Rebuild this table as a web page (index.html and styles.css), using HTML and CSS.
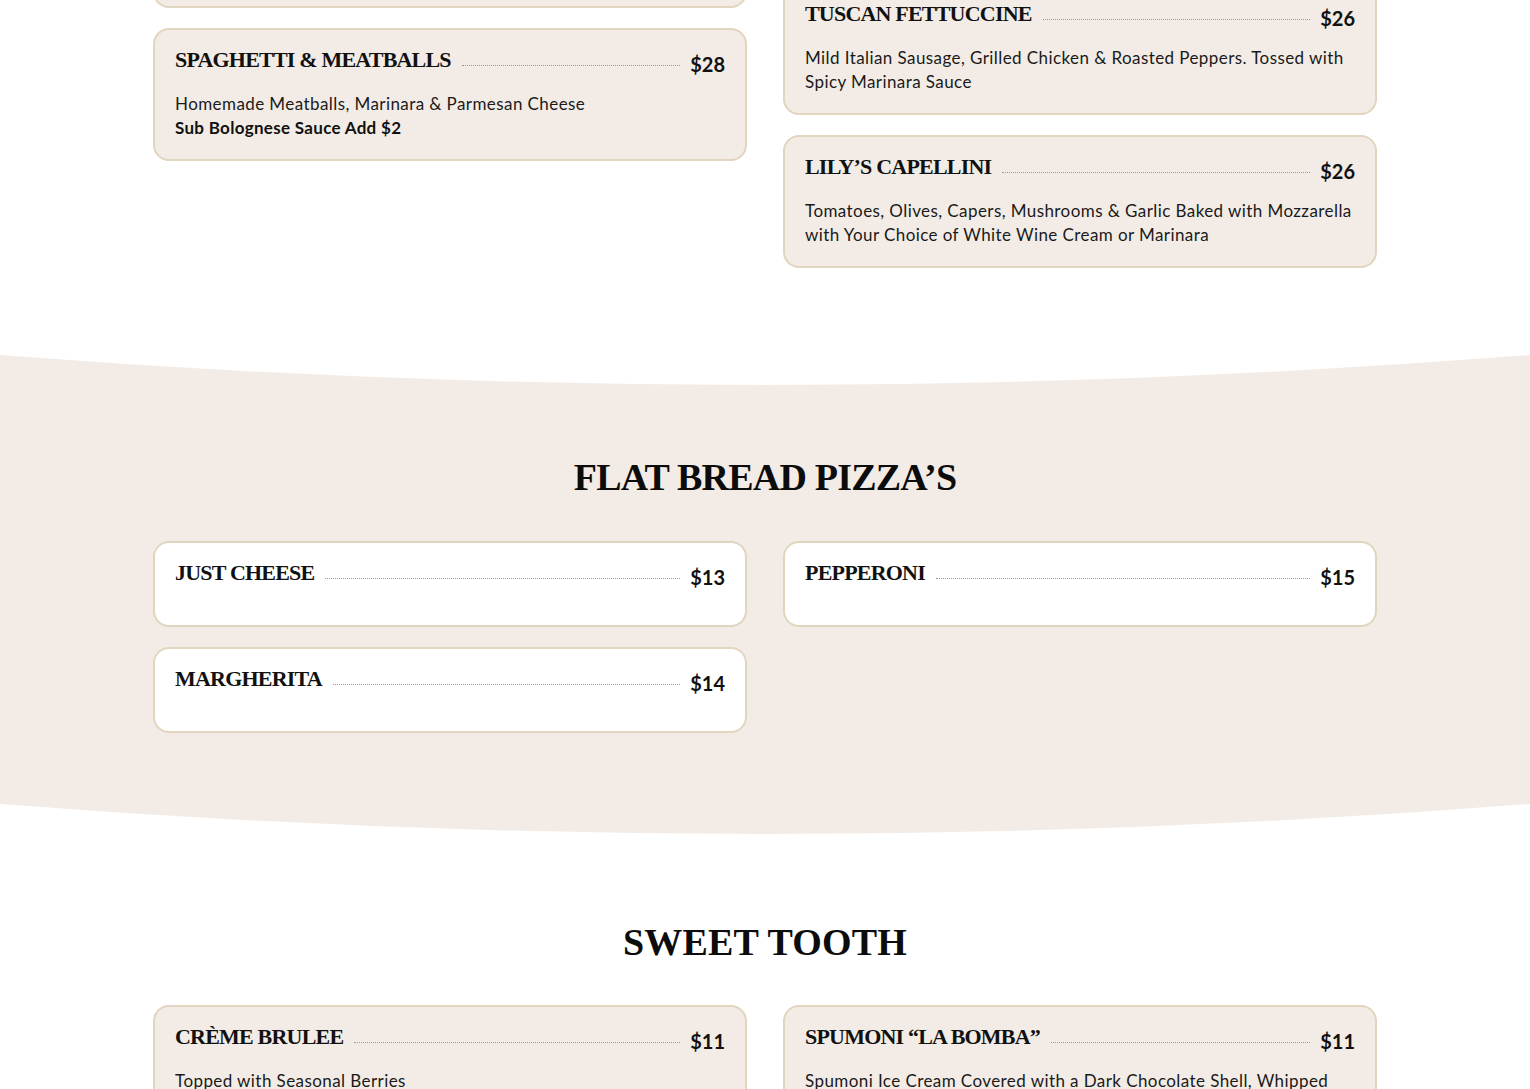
FILE: index.html
```html
<!DOCTYPE html>
<html lang="en">
<head>
<meta charset="utf-8">
<title>Menu</title>
<link rel="stylesheet" href="styles.css">
</head>
<body>
<div class="page">
  <section class="section section-top">
    <div class="columns">
      <div class="col">
        <div class="card">
          <div class="item-head"><h3 class="item-name">FETTUCCINE ALFREDO</h3><span class="dots"></span><span class="price">$24</span></div>
          <p class="desc">Creamy Parmesan Sauce Tossed with Fresh Fettuccine<br>Add Chicken $6</p>
        </div>
        <div class="card">
          <div class="item-head"><h3 class="item-name">SPAGHETTI &amp; MEATBALLS</h3><span class="dots"></span><span class="price">$28</span></div>
          <p class="desc">Homemade Meatballs, Marinara &amp; Parmesan Cheese<br><strong>Sub Bolognese Sauce Add $2</strong></p>
        </div>
      </div>
      <div class="col">
        <div class="card card-tall">
          <div class="item-head"><h3 class="item-name">BAKED ZITI</h3><span class="dots"></span><span class="price">$22</span></div>
          <p class="desc"></p>
        </div>
        <div class="card">
          <div class="item-head"><h3 class="item-name">TUSCAN FETTUCCINE</h3><span class="dots"></span><span class="price">$26</span></div>
          <p class="desc">Mild Italian Sausage, Grilled Chicken &amp; Roasted Peppers. Tossed with Spicy Marinara Sauce</p>
        </div>
        <div class="card">
          <div class="item-head"><h3 class="item-name">LILY’S CAPELLINI</h3><span class="dots"></span><span class="price">$26</span></div>
          <p class="desc">Tomatoes, Olives, Capers, Mushrooms &amp; Garlic Baked with Mozzarella with Your Choice of White Wine Cream or Marinara</p>
        </div>
      </div>
    </div>
  </section>

  <section class="band">
    <svg class="wave" viewBox="0 0 1530 30" preserveAspectRatio="none" aria-hidden="true"><path d="M0 0 Q765 60 1530 0 L1530 31 L0 31 Z" fill="#f3ece6"/></svg>
    <div class="band-body">
      <h2 class="section-title">FLAT BREAD PIZZA’S</h2>
      <div class="columns">
        <div class="col">
          <div class="card card-white">
            <div class="item-head"><h3 class="item-name">JUST CHEESE</h3><span class="dots"></span><span class="price">$13</span></div>
            <p class="desc"></p>
          </div>
          <div class="card card-white">
            <div class="item-head"><h3 class="item-name">MARGHERITA</h3><span class="dots"></span><span class="price">$14</span></div>
            <p class="desc"></p>
          </div>
        </div>
        <div class="col">
          <div class="card card-white">
            <div class="item-head"><h3 class="item-name">PEPPERONI</h3><span class="dots"></span><span class="price">$15</span></div>
            <p class="desc"></p>
          </div>
        </div>
      </div>
    </div>
    <svg class="wave" viewBox="0 0 1530 30" preserveAspectRatio="none" aria-hidden="true"><path d="M0 -1 L1530 -1 L1530 0 Q765 60 0 0 Z" fill="#f3ece6"/></svg>
  </section>

  <section class="section section-sweet">
    <h2 class="section-title section-title-wide">SWEET TOOTH</h2>
    <div class="columns">
      <div class="col">
        <div class="card">
          <div class="item-head"><h3 class="item-name">CRÈME BRULEE</h3><span class="dots"></span><span class="price">$11</span></div>
          <p class="desc">Topped with Seasonal Berries</p>
        </div>
      </div>
      <div class="col">
        <div class="card">
          <div class="item-head"><h3 class="item-name">SPUMONI “LA BOMBA”</h3><span class="dots"></span><span class="price">$11</span></div>
          <p class="desc">Spumoni Ice Cream Covered with a Dark Chocolate Shell, Whipped Cream &amp; Cherries</p>
        </div>
      </div>
    </div>
  </section>
</div>
</body>
</html>
```

FILE: styles.css
```css
* { box-sizing: border-box; }
html, body { margin: 0; padding: 0; background: #ffffff; }
body { color: #111; font-family: Lato, "Open Sans", sans-serif; overflow: hidden; }

.page { width: 100%; }

.section { width: 1224px; margin: 0 auto; }
.section-top { margin-top: -125px; padding-bottom: 87px; }
.section-sweet { padding-top: 85px; padding-bottom: 60px; }

.columns {
  display: grid;
  grid-template-columns: 1fr 1fr;
  column-gap: 36px;
  width: 1224px;
  margin: 0 auto;
  align-items: start;
}
.col { display: flex; flex-direction: column; gap: 20px; }

.card {
  background: #f3ece6;
  border: 2px solid #e2d5bf;
  border-radius: 16px;
  padding: 20px;
}
.card-white { background: #ffffff; }
.card-tall { min-height: 87px; }

.item-head {
  display: flex;
  align-items: flex-start;
  height: 30px;
  margin-bottom: 12px;
}
.item-name {
  margin: 0;
  font-family: "Liberation Serif", "Times New Roman", serif;
  font-weight: 700;
  font-size: 22px;
  letter-spacing: -0.8px;
  line-height: 20px;
  color: #111;
  white-space: nowrap;
}
.dots {
  flex: 1;
  border-top: 1px dotted #9a9a9a;
  margin: 15px 10px 0 11px;
}
.price {
  font-family: Lato, sans-serif;
  font-weight: 700;
  font-size: 20px;
  line-height: 20px;
  margin-top: 4px;
  color: #111;
}
.desc {
  margin: 0;
  font-family: Lato, sans-serif;
  font-size: 17px;
  letter-spacing: 0.42px;
  line-height: 23.5px;
  color: #1a1a1a;
}
.desc strong { font-weight: 700; color: #111; letter-spacing: 0.3px; }

.band { width: 100%; }
.wave { display: block; width: 100%; height: 30px; }
.band-body {
  background: #f3ece6;
  padding: 69px 0 71px;
}

.section-title {
  margin: 0 0 41px;
  text-align: center;
  font-family: "Liberation Serif", "Times New Roman", serif;
  font-weight: 700;
  font-size: 38px;
  line-height: 46px;
  letter-spacing: -0.8px;
  color: #0c0c0c;
}
.section-title-wide { letter-spacing: 0.2px; margin-bottom: 40px; }
```
